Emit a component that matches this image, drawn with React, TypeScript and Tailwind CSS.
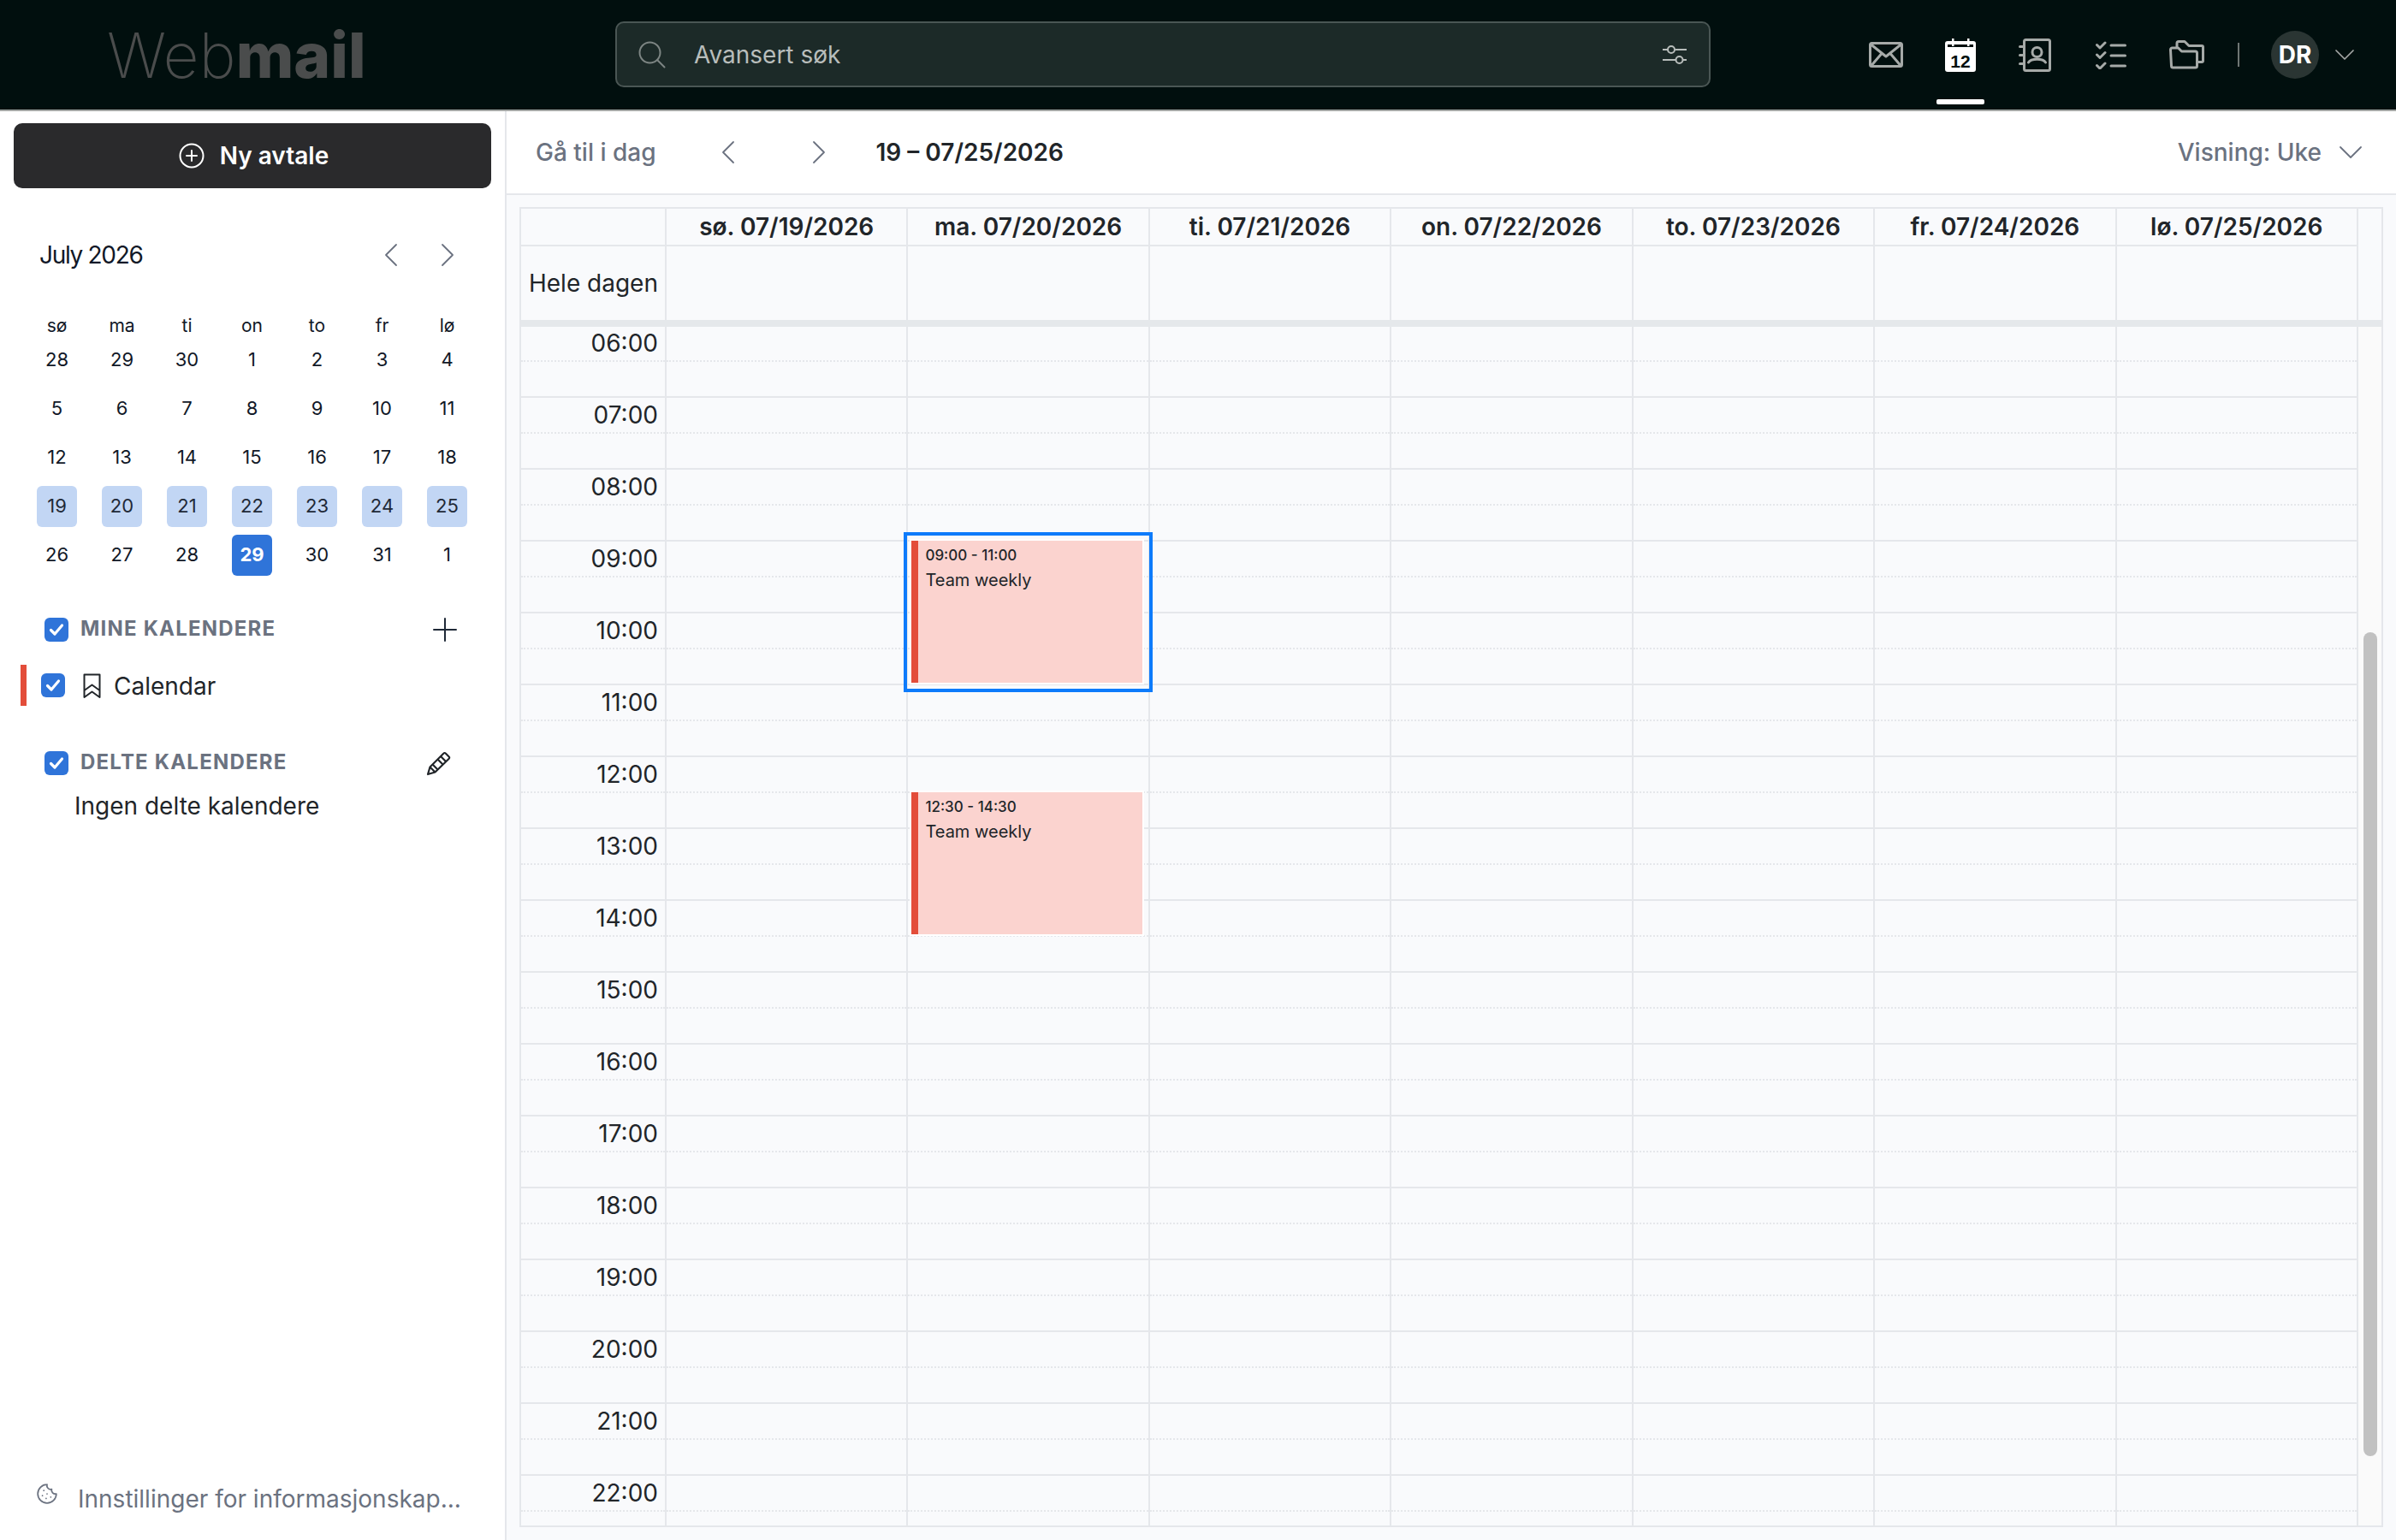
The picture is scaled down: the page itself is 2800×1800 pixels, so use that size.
import { ChevronDown, ChevronLeft, ChevronRight, Cookie } from 'lucide-react';

const font = { fontFamily: 'Inter, "Noto Sans", sans-serif' };

const hours = ['06:00', '07:00', '08:00', '09:00', '10:00', '11:00', '12:00', '13:00', '14:00', '15:00', '16:00', '17:00', '18:00', '19:00', '20:00', '21:00', '22:00'];
const dayHeaders = ['sø. 07/19/2026', 'ma. 07/20/2026', 'ti. 07/21/2026', 'on. 07/22/2026', 'to. 07/23/2026', 'fr. 07/24/2026', 'lø. 07/25/2026'];
const weekdays = ['sø', 'ma', 'ti', 'on', 'to', 'fr', 'lø'];
const weeks = [
  [28, 29, 30, 1, 2, 3, 4],
  [5, 6, 7, 8, 9, 10, 11],
  [12, 13, 14, 15, 16, 17, 18],
  [19, 20, 21, 22, 23, 24, 25],
  [26, 27, 28, 29, 30, 31, 1],
];

function Checkbox() {
  return (
    <div className="w-[28px] h-[28px] shrink-0 rounded-[6px] bg-[#2f74d9] flex items-center justify-center">
      <svg width="20" height="20" viewBox="0 0 20 20" fill="none" stroke="white" strokeWidth="3.2" strokeLinecap="round" strokeLinejoin="round">
        <path d="M3.5 10.5l4.5 4.5 8.5-10" />
      </svg>
    </div>
  );
}

function TopIcons() {
  return (
    <div className="ml-auto flex items-center pr-[40px] text-[#a6aaa8]">
      <svg width="40" height="30" viewBox="0 0 40 30" fill="none" stroke="currentColor" strokeWidth="3" strokeLinejoin="round">
        <rect x="1.5" y="1.5" width="37" height="27" rx="2" />
        <path d="M2.5 3L20 17 37.5 3M3 27.5L15 13.5M37 27.5L25 13.5" />
      </svg>
      <div className="relative ml-[49px] h-[39px]">
        <svg width="36" height="39" viewBox="0 0 36 39">
          <rect x="0" y="3" width="36" height="36" rx="3" fill="white" />
          <rect x="3" y="7" width="30" height="3" fill="#010f0e" />
          <rect x="8" y="0" width="2.5" height="9" fill="white" />
          <rect x="26" y="0" width="2.5" height="9" fill="white" />
          <text x="18" y="34" textAnchor="middle" fontSize="21" fontWeight="800" fill="#010f0e" fontFamily="Liberation Sans, sans-serif">12</text>
        </svg>
        <div className="absolute left-[-10px] top-[71px] w-[56px] h-[6px] rounded-[2px] bg-white" />
      </div>
      <svg className="ml-[50px]" width="38" height="39" viewBox="0 0 38 39" fill="none" stroke="currentColor" strokeWidth="3" strokeLinecap="round">
        <rect x="6.5" y="1.5" width="30" height="36" rx="2" />
        <path d="M1.5 9.5H6M1.5 19.5H6M1.5 29.5H6" />
        <circle cx="21.5" cy="16" r="5.5" />
        <path d="M11.5 28c3-5 17-5 20 0" />
      </svg>
      <svg className="ml-[52px]" width="36" height="33" viewBox="0 0 36 33" fill="none" stroke="currentColor" strokeWidth="3" strokeLinecap="round" strokeLinejoin="round">
        <path d="M1.5 4.5l3.5 3.5 6-6M1.5 16l3.5 3.5 6-6M1.5 28.5L5 32l6-6" />
        <path d="M18 5h16.5M18 17h16.5M18 29h16.5" />
      </svg>
      <svg className="ml-[50px]" width="41" height="34" viewBox="0 0 41 34" fill="none" stroke="currentColor" strokeWidth="3" strokeLinejoin="round">
        <path d="M1.5 11a2 2 0 0 1 2-2h7l4 4h16a2 2 0 0 1 2 2v15a2 2 0 0 1-2 2h-26a2 2 0 0 1-2-2z" />
        <path d="M9 8V3.5a2 2 0 0 1 2-2h7l5 5h15a1.500 1.500 0 0 1 1.500 1.500v16a1.500 1.500 0 0 1-1.500 1.500h-5" />
      </svg>
      <div className="ml-[39px] w-[2px] h-[28px] bg-[#6f7674]" />
      <div className="ml-[37px] w-[56px] h-[56px] rounded-full bg-[#2a3533] flex items-center justify-center text-white text-[28px] font-bold">DR</div>
      <ChevronDown className="ml-[10px] w-[40px] h-[40px] text-[#a6aaa8]" strokeWidth={1} />
    </div>
  );
}

function MiniCalendar() {
  return (
    <div className="ml-[28.5px] w-[532px]">
      <div className="grid grid-cols-7 h-[23px] mt-[47px]">
        {weekdays.map((d) => (
          <div key={d} className="text-center text-[21px] leading-[24px] text-[#111827]">{d}</div>
        ))}
      </div>
      {weeks.map((week, w) => (
        <div key={w} className="grid grid-cols-7 h-[57px]">
          {week.map((day, i) => {
            const selected = w === 3;
            const today = w === 4 && day === 29;
            return (
              <div key={i} className="flex items-center justify-center">
                <div
                  className={`w-[47px] h-[48px] rounded-[6px] flex items-center justify-center text-[22px] ${
                    selected ? 'bg-[#c2d6f4] text-[#1f2937]' : today ? 'bg-[#2f74d9] text-white font-bold' : 'text-[#111827]'
                  }`}
                >
                  {day}
                </div>
              </div>
            );
          })}
        </div>
      ))}
    </div>
  );
}

function Sidebar() {
  return (
    <aside className="w-[592px] shrink-0 border-r-2 border-[#e5e7eb] bg-white flex flex-col">
      <button className="mt-[14px] ml-[16px] w-[558px] h-[76px] shrink-0 rounded-[10px] bg-[#2a2a2c] text-white flex items-center justify-center gap-[18px] pl-[3px] text-[28px] font-semibold">
        <svg width="30" height="30" viewBox="0 0 30 30" fill="none" stroke="white" strokeWidth="2" strokeLinecap="round">
          <circle cx="15" cy="15" r="13.500" />
          <path d="M15 9v12M9 15h12" />
        </svg>
        Ny avtale
      </button>

      <div className="mt-[54px] h-[48px] flex items-center pl-[46px] pr-[43px]">
        <span className="text-[28px] tracking-[-1.300px] text-[#111827]">July 2026</span>
        <ChevronLeft className="ml-auto w-[48px] h-[48px] text-[#6b7280]" strokeWidth={0.9} />
        <ChevronRight className="ml-[18px] w-[48px] h-[48px] text-[#6b7280]" strokeWidth={0.9} />
      </div>

      <MiniCalendar />

      <div className="mt-[45px] ml-[52px] h-[28px] flex items-center">
        <Checkbox />
        <span className="ml-[14px] -mt-[3px] text-[24px] font-bold tracking-[1.200px] text-[#6b7280]">MINE KALENDERE</span>
        <svg className="ml-auto mr-[56px]" width="28" height="28" viewBox="0 0 28 28" stroke="#1f2937" strokeWidth="2" strokeLinecap="round">
          <path d="M14 1v26M1 14h26" />
        </svg>
      </div>

      <div className="mt-[27px] ml-[24px] h-[48px] flex items-center border-l-[7px] border-[#e34d3a]">
        <div className="ml-[17px]">
          <Checkbox />
        </div>
        <svg className="ml-[21px] mt-[2px]" width="21" height="30" viewBox="0 0 21 30" fill="none" stroke="#212529" strokeWidth="2" strokeLinejoin="round">
          <path d="M1.500 1.500h18v26.500l-9-6.500-9 6.500zM1.500 20l9-6.500 9 6.500" />
        </svg>
        <span className="ml-[15px] mt-[2px] text-[28px] text-[#212529]">Calendar</span>
      </div>

      <div className="mt-[53px] ml-[52px] h-[28px] flex items-center">
        <Checkbox />
        <span className="ml-[14px] -mt-[3px] text-[24px] font-bold tracking-[1.200px] text-[#6b7280]">DELTE KALENDERE</span>
        <svg className="ml-auto mr-[62px]" width="30" height="30" viewBox="0 0 30 30" fill="none" stroke="#212529" strokeWidth="2.200" strokeLinejoin="round">
          <path d="M2 28l2.500-8.500L20.500 3.500a1.500 1.500 0 0 1 2.200 0l4 4a1.500 1.500 0 0 1 0 2.200L10.500 25.500z" />
          <path d="M17 7l6 6M4.500 19.500l6 6M7.500 16.500l6 6M13.500 10.500l6 6" />
        </svg>
      </div>

      <div className="mt-[16px] ml-[87px] h-[40px] flex items-center text-[28px] text-[#212529]">Ingen delte kalendere</div>

      <div className="mt-auto mb-[28px] ml-[42px] h-[40px] flex items-center text-[#6b7280]">
        <Cookie className="w-[26px] h-[26px] -mt-[12px]" strokeWidth={1.6} />
        <span className="ml-[23px] text-[28px]">Innstillinger for informasjonskap...</span>
      </div>
    </aside>
  );
}

function Toolbar() {
  return (
    <div className="h-[98px] shrink-0 bg-white border-b-2 border-[#e5e7eb] flex items-center pl-[34px] pr-[29px]">
      <span className="-mt-[1px] text-[28px] font-medium text-[#6b7280]">Gå til i dag</span>
      <ChevronLeft className="ml-[61px] w-[48px] h-[48px] text-[#6b7280]" strokeWidth={0.9} />
      <ChevronRight className="ml-[58px] w-[48px] h-[48px] text-[#6b7280]" strokeWidth={0.9} />
      <span className="ml-[42px] -mt-[1px] text-[28px] font-semibold text-[#212529]">19 – 07/25/2026</span>
      <span className="ml-auto -mt-[1px] text-[28px] font-medium text-[#6b7280]">Visning: Uke</span>
      <ChevronDown className="ml-[10px] w-[48px] h-[48px] text-[#6b7280]" strokeWidth={0.9} />
    </div>
  );
}

function HourCell({ label }: { label?: string }) {
  return (
    <div className="h-[84px] border-t-2 border-[#e5e7eb]">
      <div className="h-[42px] border-b-2 border-dotted border-[#e5e7eb] pr-[8px] pt-[2px] text-right text-[28px] leading-[36px] text-[#212529]">
        {label}
      </div>
    </div>
  );
}

function EventBox({ top, time }: { top: string; time: string }) {
  return (
    <div className={`absolute left-[4px] w-[270px] h-[166px] bg-[#fbd3cf] border-l-[8px] border-[#e34d3a] outline-2 outline-white pl-[8px] pt-[5px] text-[#212529] ${top}`}>
      <div className="text-[17px] leading-[24px] font-medium">{time}</div>
      <div className="mt-[4px] text-[20px] leading-[26px]">Team weekly</div>
    </div>
  );
}

function WeekGrid() {
  return (
    <div className="flex-1 min-h-0 mt-[14px] mx-[15px] mb-[15px] border-2 border-[#e5e7eb] flex flex-col">
      <div className="flex shrink-0">
        <div className="grid grid-cols-[168px_repeat(7,282.43px)] w-[2145px] h-[44px] border-b-2 border-[#e5e7eb]">
          <div />
          {dayHeaders.map((d) => (
            <div key={d} className="border-l-2 border-[#e5e7eb] text-center text-[28px] leading-[42px] font-semibold text-[#212529]">{d}</div>
          ))}
        </div>
        <div className="w-[29px] border-l-2 border-[#e5e7eb]" />
      </div>
      <div className="flex shrink-0">
        <div className="grid grid-cols-[168px_repeat(7,282.43px)] w-[2145px] h-[86px]">
          <div className="pr-[8px] text-right text-[28px] leading-[86px] text-[#212529]">Hele dagen</div>
          {dayHeaders.map((d) => (
            <div key={d} className="border-l-2 border-[#e5e7eb]" />
          ))}
        </div>
        <div className="w-[29px] border-l-2 border-[#e5e7eb]" />
      </div>
      <div className="h-[8px] shrink-0 bg-[#e5e8eb]" />

      <div className="flex flex-1 min-h-0 overflow-hidden">
        <div className="w-[2145px] -mt-[3px] grid grid-cols-[168px_repeat(7,282.43px)] content-start">
          <div>
            {hours.map((h) => (
              <HourCell key={h} label={h} />
            ))}
          </div>
          {dayHeaders.map((d, i) => (
            <div key={d} className="relative border-l-2 border-[#e5e7eb]">
              {hours.map((h) => (
                <HourCell key={h} />
              ))}
              {i === 1 && (
                <>
                  <EventBox top="top-[253px]" time="09:00 - 11:00" />
                  <EventBox top="top-[547px]" time="12:30 - 14:30" />
                  <div className="absolute -left-[5px] top-[243px] w-[291px] h-[187px] border-4 border-[#0d7bfb] z-10" />
                </>
              )}
            </div>
          ))}
        </div>
        <div className="relative w-[29px] border-l-2 border-[#e5e7eb] bg-[#fafafa]">
          <div className="absolute left-[6px] top-[357px] w-[16px] h-[963px] rounded-full bg-[#c1c1c1]" />
        </div>
      </div>
    </div>
  );
}

export default function App() {
  return (
    <div className="w-[2800px] h-[1800px] flex flex-col overflow-hidden bg-white" style={font}>
      <header className="h-[130px] shrink-0 bg-[#010f0e] border-b-2 border-[#a3a6a4] flex items-center">
        <div className="w-[719px] shrink-0 pl-[125px] pt-[2px] text-[73px] leading-[76px] text-[#4a4c4c]">
          <span className="font-extralight">Web</span>
          <span className="font-extrabold">mail</span>
        </div>
        <div className="w-[1280px] h-[77px] -mt-[1px] shrink-0 rounded-[10px] border-2 border-[#4a5654] bg-[#1c2a28] flex items-center pl-[25px] pr-[26px] text-[#b8bdbb]">
          <svg width="32" height="32" viewBox="0 0 32 32" fill="none" stroke="#7d8583" strokeWidth="2" strokeLinecap="round">
            <circle cx="13.500" cy="13.500" r="12" />
            <path d="M22 22l8.500 8.500" />
          </svg>
          <span className="ml-[33px] text-[28px]">Avansert søk</span>
          <svg className="ml-auto" width="28" height="24" viewBox="0 0 28 24" fill="none" stroke="#b8bdbb" strokeWidth="2">
            <path d="M0 6h6M15 6h13M0 18h15M24 18h4" />
            <circle cx="10" cy="6" r="4" />
            <circle cx="19.500" cy="18" r="4" />
          </svg>
        </div>
        <TopIcons />
      </header>

      <div className="flex flex-1 min-h-0">
        <Sidebar />
        <main className="flex-1 min-w-0 bg-[#f9fafc] flex flex-col">
          <Toolbar />
          <WeekGrid />
        </main>
      </div>
    </div>
  );
}
